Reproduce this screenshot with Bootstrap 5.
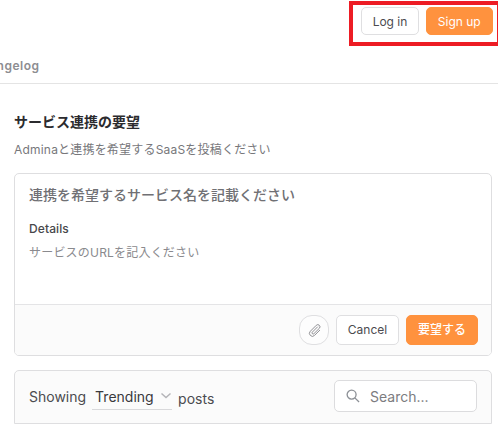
<!DOCTYPE html>
<html lang="ja">
<head>
<meta charset="utf-8">
<meta name="viewport" content="width=device-width, initial-scale=1">
<title>サービス連携の要望</title>
<link href="https://cdn.jsdelivr.net/npm/bootstrap@5.3.0/dist/css/bootstrap.min.css" rel="stylesheet">
<style>
body{font-family:Inter,"Noto Sans CJK JP",sans-serif;color:#4b4b4f;background:#fff;height:424px;overflow:hidden}
.topbar{height:51px;padding-top:1px}
.auth-frame{width:152px;height:45px;margin-right:-3px;border:4px solid #ed1c24;padding:2px 4.500px 0 8px}
.tabs-row{height:33px;border-bottom:1px solid #e4e4e4;padding-top:6px;font-size:12px;line-height:18px;font-weight:600;color:#8d8d91}
.tabs-row span{margin-left:-28px;letter-spacing:.5px}
.btn{--bs-btn-padding-x:0;--bs-btn-padding-y:0;--bs-btn-font-size:12px;--bs-btn-border-radius:5px;--bs-btn-line-height:1}
.btn-plain{--bs-btn-color:#4b4b4f;--bs-btn-bg:#fff;--bs-btn-border-color:#dfdfe1}
.btn-accent{--bs-btn-color:#fff;--bs-btn-bg:#ff923e;--bs-btn-border-color:#ff923e}
.h-28{height:28px;padding-top:1px}.h-30{height:30px}
.w-login{width:58px}.w-signup{width:66.500px}.w-cancel{width:63px}.w-send{width:72px;font-weight:500}.w-clip{width:30px;--bs-btn-bg:#fdfdfd;--bs-btn-border-radius:13px}
.page{padding:28px 6px 0 14px}
.page h1{font-size:14px;line-height:20px;font-weight:700;color:#2b2b2e;margin:0 0 8px}
.intro{font-size:12px;line-height:20px;color:#77777b;margin:0 0 13px;letter-spacing:.2px}
.box{--bs-card-border-color:#dedee0;--bs-card-border-radius:5px;--bs-card-inner-border-radius:4px}
.form-area{height:130px;padding:11px 14px 0}
.idea{font-size:14px;line-height:20px;font-weight:500;color:#707074}
.label-d{font-size:12px;line-height:18px;font-weight:500;color:#47474b;margin-top:15px;letter-spacing:.1px}
.hint{font-size:12px;line-height:18px;color:#8a8a8e;margin-top:6px;letter-spacing:.2px}
.box .card-footer{height:51px;padding:0 13px;gap:7px;background:#fbfbfb;border-color:#e4e4e6}
.posts{height:54px;margin-top:14px;background:#fbfbfb;padding:0 14px 2px;border-bottom-left-radius:0;border-bottom-right-radius:0;font-size:14px}
.sorter{width:80px;height:23px;border-bottom:1px solid #d9d9db;margin:4px 6px 0 6px;padding-left:3px;line-height:19px;color:#39393d}
.search{width:143px;height:32px;background:#fff;border:1px solid #dcdcde;border-radius:5px;color:#7c7c80;padding-left:11px;gap:10px}
</style>
<script src="https://cdn.jsdelivr.net/npm/bootstrap@5.3.0/dist/js/bootstrap.bundle.min.js"></script>
</head>
<body>
<header class="topbar d-flex justify-content-end align-items-start">
  <div class="auth-frame d-flex align-items-start flex-shrink-0">
    <button class="btn btn-plain h-28 w-login">Log in</button>
    <button class="btn btn-accent h-28 w-signup ms-auto">Sign up</button>
  </div>
</header>
<nav class="tabs-row"><span>Changelog</span></nav>
<main class="page">
  <h1>サービス連携の要望</h1>
  <p class="intro text-nowrap"><span>Adminaと連携を希望するSaaSを投稿ください</span></p>
  <section class="card box">
    <div class="form-area">
      <div class="idea"><span>連携を希望するサービス名を記載ください</span></div>
      <div class="label-d"><span>Details</span></div>
      <div class="hint"><span>サービスのURLを記入ください</span></div>
    </div>
    <div class="card-footer d-flex align-items-center justify-content-end">
      <button class="btn btn-plain h-30 w-clip d-flex align-items-center justify-content-center" aria-label="Attach">
        <svg width="13" height="13" viewBox="0 0 24 24" fill="none" stroke="#8c8c90" stroke-width="1.8" stroke-linecap="round" stroke-linejoin="round"><path d="M17.500 5.500l-9.500 9.500a2 2 0 0 0 2.900 2.900l10-9.900a3.900 3.900 0 0 0-5.600-5.600l-11 11a5.400 5.400 0 0 0 7.700 7.700l9.500-9.500"/></svg>
      </button>
      <button class="btn btn-plain h-30 w-cancel">Cancel</button>
      <button class="btn btn-accent h-30 w-send">要望する</button>
    </div>
  </section>
  <section class="card box posts flex-row align-items-center">
    <span>Showing</span>
    <div class="sorter d-flex justify-content-between"><span>Trending</span>
      <svg class="mt-1" width="12" height="10" viewBox="0 0 12 10" fill="none" stroke="#b4b4b8" stroke-width="1.500"><path d="M1.500 2.500l4.500 4 4.500-4"/></svg>
    </div>
    <span class="pt-1">posts</span>
    <div class="search d-flex align-items-center ms-auto">
      <svg width="14" height="14" viewBox="0 0 15 15" fill="none" stroke="#8c9096" stroke-width="1.400"><circle cx="6" cy="6" r="4.800"/><path d="M9.500 9.500l4.500 4.500"/></svg>
      <span>Search...</span>
    </div>
  </section>
</main>
</body>
</html>
